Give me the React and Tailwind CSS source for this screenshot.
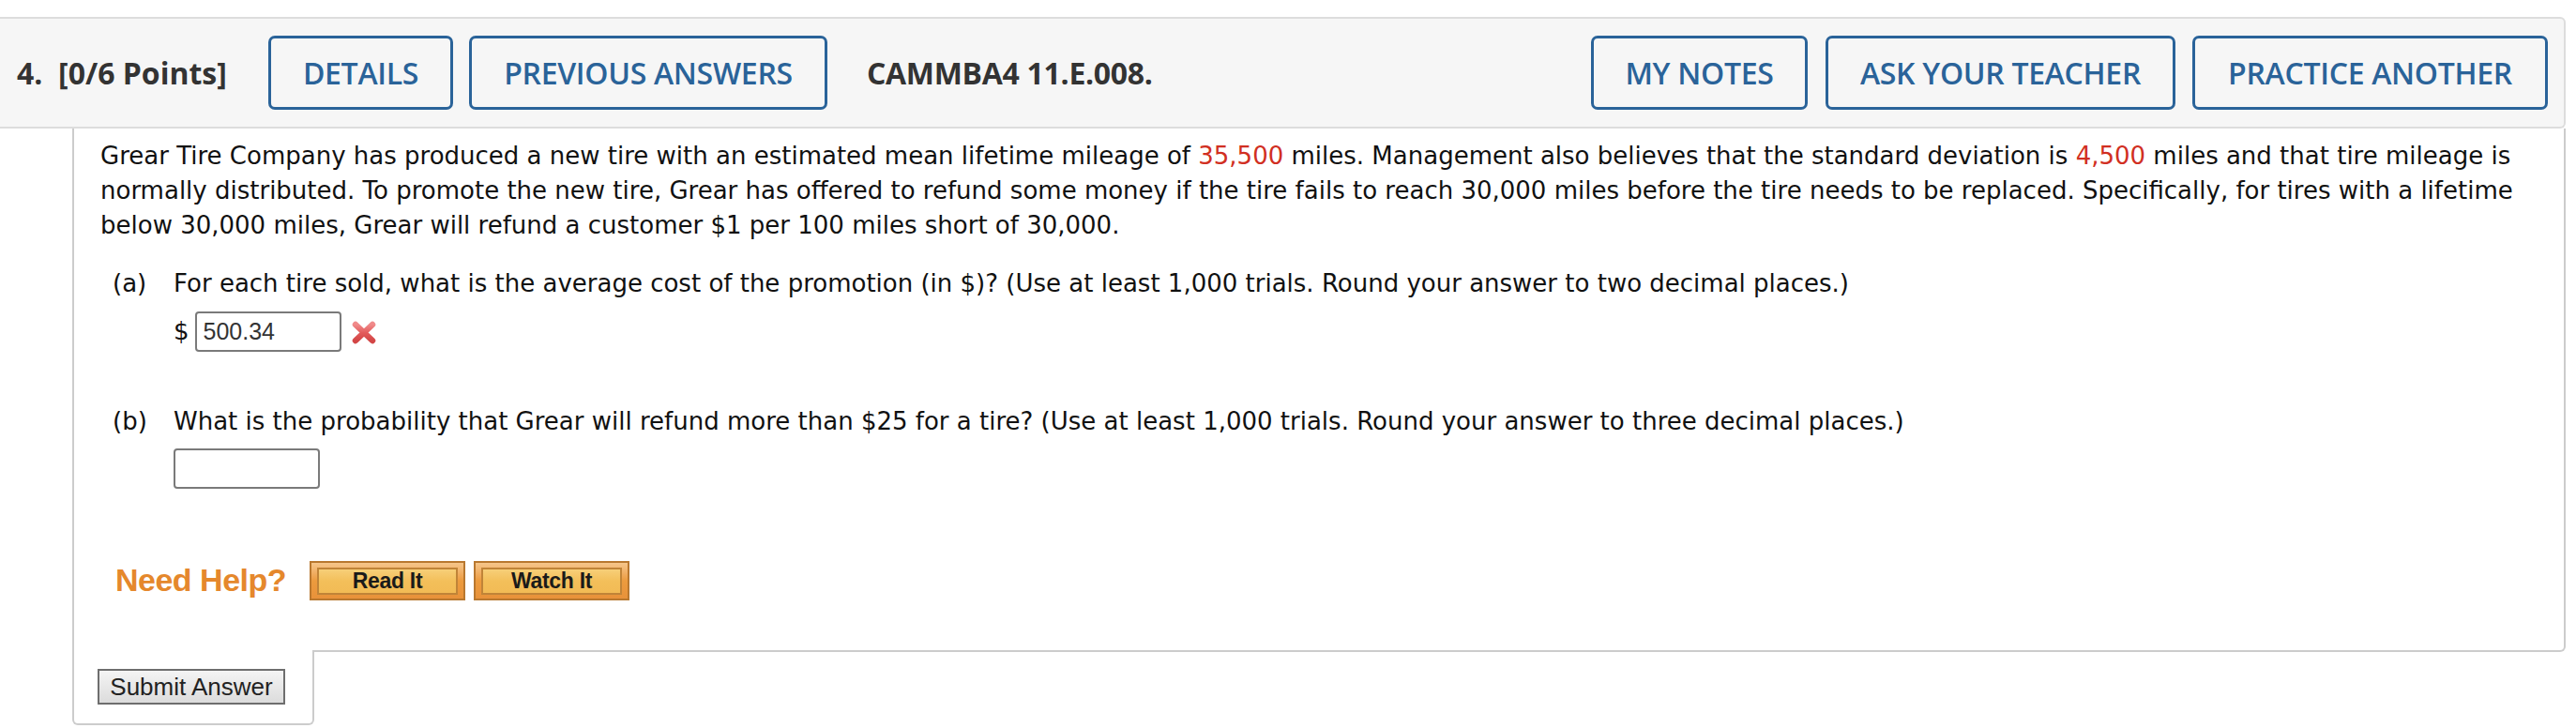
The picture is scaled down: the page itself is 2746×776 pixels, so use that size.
import React from "react";

const blue = "border-[#2a6399] text-[#2a6399]";

function HeadBtn({ w, children, className = "" }) {
  return (
    <div
      className={`h-[79px] ${w} border-[3px] ${blue} rounded-[7px] flex items-center justify-center text-[32px] font-semibold tracking-[-0.3px] shrink-0 ${className}`}
    >
      {children}
    </div>
  );
}

function HelpBtn({ children, className = "" }) {
  return (
    <div
      className={`w-[166px] h-[42px] border-2 border-[#b9782f] bg-gradient-to-b from-[#f6c68a] via-[#ec9b3e] to-[#e8923a] pt-[5px] pb-[4px] px-[6px] ${className}`}
    >
      <div className="h-full border-2 border-[#c08438] bg-gradient-to-b from-[#f7cf78] via-[#f3bf5a] to-[#f2bb55] flex items-center justify-center text-[23px] font-bold text-[#1a1a1a] leading-none tracking-[-0.3px]">
        {children}
      </div>
    </div>
  );
}

function XIcon() {
  return (
    <svg width="28" height="25" viewBox="0 0 28 25" className="ml-[10px] mt-[2px]">
      <defs>
        <linearGradient id="xg" x1="0" y1="0" x2="0" y2="1">
          <stop offset="0" stopColor="#f08a8a" />
          <stop offset="0.5" stopColor="#e35c5c" />
          <stop offset="1" stopColor="#d34646" />
        </linearGradient>
      </defs>
      <path d="M5 4 L23 21 M23 4 L5 21" stroke="url(#xg)" strokeWidth="6.5" strokeLinecap="round" fill="none" />
    </svg>
  );
}

export default function App() {
  const red = "text-[#d12f22]";
  return (
    <div className="w-[2746px] h-[776px] bg-white pt-[18px] overflow-hidden">
      {/* Header */}
      <div
        className="mr-[11px] h-[119px] border-y-2 border-r-2 border-[#dddddd] rounded-r-[6px] bg-[#f6f6f6] flex items-center pr-[17px] text-[#333333]"
        style={{ fontFamily: "'Open Sans', sans-serif" }}
      >
        <div className="w-[286px] shrink-0 pl-[18px] text-[32px] font-bold whitespace-pre">
          {"4.  [0/6 Points]"}
        </div>
        <HeadBtn w="w-[197px]">DETAILS</HeadBtn>
        <HeadBtn w="w-[382px]" className="ml-[17px]">PREVIOUS ANSWERS</HeadBtn>
        <div className="ml-[42px] text-[32px] font-bold tracking-[-0.3px]">CAMMBA4 11.E.008.</div>
        <div className="flex-1" />
        <HeadBtn w="w-[231px]">MY NOTES</HeadBtn>
        <HeadBtn w="w-[373px]" className="ml-[19px]">ASK YOUR TEACHER</HeadBtn>
        <HeadBtn w="w-[379px]" className="ml-[18px]">PRACTICE ANOTHER</HeadBtn>
      </div>

      {/* Question body */}
      <div
        className="ml-[77px] mr-[11px] border-l-2 border-r-2 border-b-2 border-[#cccccc] rounded-br-[6px] pl-[28px] pt-[11px] pb-[49px] text-[#111111]"
        style={{ fontFamily: "'DejaVu Sans', Verdana, sans-serif" }}
      >
        <p className="text-[26px] leading-[37px] whitespace-nowrap">
          Grear Tire Company has produced a new tire with an estimated mean lifetime mileage of{" "}
          <span className={red}>35,500</span> miles. Management also believes that the standard deviation is{" "}
          <span className={red}>4,500</span> miles and that tire mileage is
          <br />
          normally distributed. To promote the new tire, Grear has offered to refund some money if the tire fails to
          reach 30,000 miles before the tire needs to be replaced. Specifically, for tires with a lifetime
          <br />
          below 30,000 miles, Grear will refund a customer $1 per 100 miles short of 30,000.
        </p>

        <div className="mt-[25px] flex text-[26px] leading-[37px]">
          <div className="w-[78px] pl-[13px] shrink-0">(a)</div>
          <div>
            For each tire sold, what is the average cost of the promotion (in $)? (Use at least 1,000 trials. Round
            your answer to two decimal places.)
          </div>
        </div>
        <div className="mt-[11px] ml-[78px] flex items-center text-[26px]">
          <span>$</span>
          <div
            className="ml-[6px] w-[156px] h-[43px] border-2 border-[#7a7a7a] rounded-[4px] bg-white flex items-center pl-[7px] text-[25px] text-[#333333]"
            style={{ fontFamily: "'Liberation Sans', Arial, sans-serif" }}
          >
            500.34
          </div>
          <XIcon />
        </div>

        <div className="mt-[56px] flex text-[26px] leading-[37px]">
          <div className="w-[78px] pl-[13px] shrink-0">(b)</div>
          <div>
            What is the probability that Grear will refund more than $25 for a tire? (Use at least 1,000 trials. Round
            your answer to three decimal places.)
          </div>
        </div>
        <div className="mt-[10px] ml-[78px]">
          <div className="w-[156px] h-[43px] border-2 border-[#7a7a7a] rounded-[4px] bg-white" />
        </div>

        <div
          className="mt-[72px] ml-[16px] flex items-center"
          style={{ fontFamily: "'Liberation Sans', Arial, sans-serif" }}
        >
          <span className="text-[34px] font-bold text-[#e5882c] tracking-[-0.5px] w-[207px]">Need Help?</span>
          <HelpBtn>Read It</HelpBtn>
          <HelpBtn className="ml-[9px]">Watch It</HelpBtn>
        </div>
      </div>

      {/* Submit tab */}
      <div className="relative z-10 -mt-[2px] ml-[77px] w-[258px] h-[80px] bg-white border-l-2 border-r-2 border-b-2 border-[#cccccc] rounded-b-[6px] pl-[25px] pt-[20px]">
        <div
          className="w-[200px] h-[38px] border-2 border-[#6e6e6e] bg-gradient-to-b from-[#f4f4f4] to-[#dcdcdc] flex items-center justify-center text-[26px] text-[#222222] leading-none"
          style={{ fontFamily: "'Liberation Sans', Arial, sans-serif" }}
        >
          Submit Answer
        </div>
      </div>
    </div>
  );
}
